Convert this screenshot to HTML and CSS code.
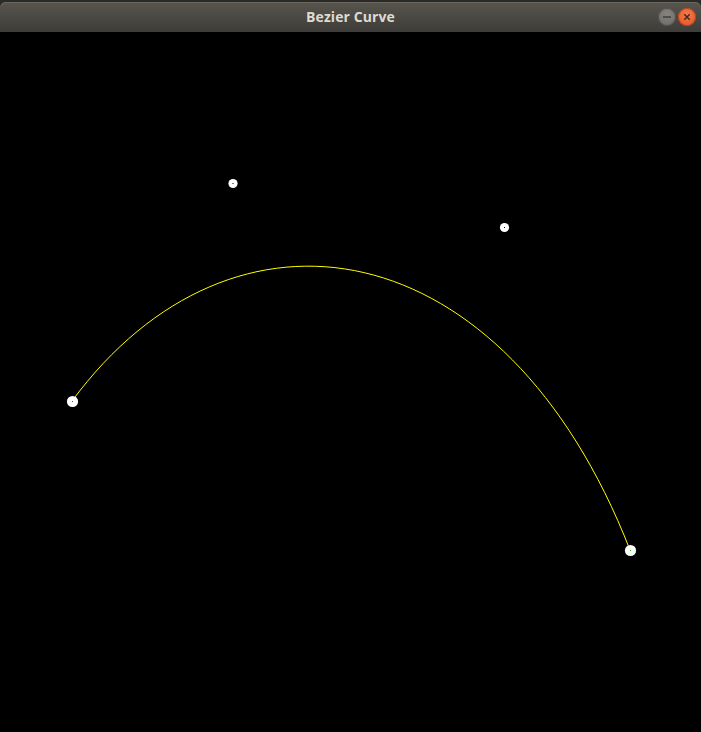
FILE: index.html
```html
<!DOCTYPE html>
<html>
<head>
<meta charset="utf-8">
<title>Bezier Curve</title>
<link rel="stylesheet" href="styles.css">
</head>
<body>
<div class="window">
  <div class="titlebar">
    <span class="title">Bezier Curve</span>
    <div class="controls">
      <span class="btn min"><svg width="18" height="18" viewBox="0 0 18 18"><line x1="5" y1="9" x2="13" y2="9" stroke="#3c3b37" stroke-width="1.4"/></svg></span>
      <span class="btn close"><svg width="18" height="18" viewBox="0 0 18 18"><path d="M6.3 6.3 L11.7 11.7 M11.7 6.3 L6.3 11.7" stroke="#3c2a20" stroke-width="1.4"/></svg></span>
    </div>
  </div>
  <div class="canvas">
    <svg class="scene" width="701" height="700" viewBox="0 32 701 700">
      <path d="M72 401 C233 183 504 227 630 550" fill="none" stroke="#ffff00" stroke-width="1"/>
      <circle cx="233" cy="183.5" r="4.6" fill="#fff"/>
      <rect x="232.5" y="183" width="1" height="1" fill="#000"/>
      <circle cx="504.5" cy="227.5" r="4.6" fill="#fff"/>
      <rect x="504" y="227" width="1" height="1" fill="#000"/>
      <circle cx="72.5" cy="401.5" r="5.6" fill="#fff"/>
      <rect x="72" y="401" width="1" height="1" fill="#ff0000"/>
      <circle cx="630.5" cy="550.5" r="5.6" fill="#fff"/>
      <rect x="630" y="550" width="1" height="1" fill="#00c000"/>
    </svg>
  </div>
</div>
</body>
</html>
```
FILE: styles.css
```css
html, body {
  margin: 0;
  padding: 0;
  background: #000;
  width: 701px;
  height: 732px;
  overflow: hidden;
}
.window {
  display: flex;
  flex-direction: column;
  width: 701px;
  height: 732px;
  background: #2a2a28;
}
.titlebar {
  position: relative;
  height: 30px;
  margin-top: 2px;
  border-radius: 6px 6px 0 0;
  background: linear-gradient(#58554e, #3d3c38);
  display: flex;
  align-items: center;
  justify-content: center;
  box-shadow: inset 0 1px 0 #6a675f;
}
.title {
  font-family: "Open Sans", "DejaVu Sans", sans-serif;
  font-weight: 700;
  font-size: 14px;
  color: #dfdbd2;
  letter-spacing: 0.1px;
  margin-top: -1px;
}
.controls {
  position: absolute;
  right: 5px;
  top: 6px;
  display: flex;
  gap: 2px;
}
.btn {
  width: 18px;
  height: 18px;
  border-radius: 50%;
  display: flex;
}
.btn.min {
  background: radial-gradient(circle at 50% 35%, #85847f, #696864);
  box-shadow: inset 0 0 0 1px #4f4e4a;
}
.btn.close {
  background: radial-gradient(circle at 50% 35%, #f47a4c, #e2501f);
  box-shadow: inset 0 0 0 1px #b8421c;
}
.canvas {
  flex: 1;
  background: #000;
  display: flex;
}
.scene {
  display: block;
}
```
